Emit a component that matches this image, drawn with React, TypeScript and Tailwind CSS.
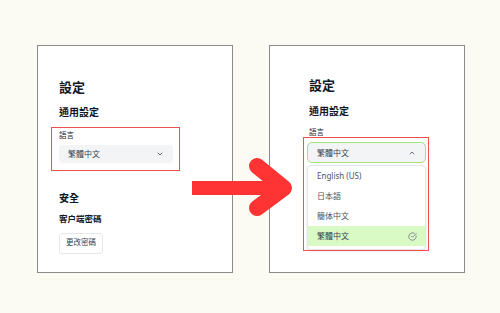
import React from "react";
import { ChevronDown, ChevronUp, CircleCheckBig } from "lucide-react";

const font = { fontFamily: "'Noto Sans', 'Noto Sans CJK TC', sans-serif" };

function Security({ mt, hidden }: { mt: string; hidden?: boolean }) {
  return (
    <div className={hidden ? "invisible flex flex-col" : "flex flex-col"}>
      <div className={`${mt} text-[10px] leading-[12px] font-bold text-gray-900`}>安全</div>
      <div className="mt-[9px] text-[8.5px] leading-[12px] font-bold text-gray-900">客户端密碼</div>
      <div className="mt-[8px] flex">
        <div className="h-[21px] px-[6px] flex items-center rounded-[3px] border border-gray-200 bg-white text-[7.5px] text-gray-700">
          更改密碼
        </div>
      </div>
    </div>
  );
}

export default function App() {
  return (
    <div
      className="relative w-[500px] h-[313px] bg-[#fbfbf4] flex items-start pl-[37px] pt-[45px] gap-[36px] overflow-hidden"
      style={font}
    >
      {/* Left panel */}
      <div className="w-[196px] h-[228px] bg-white border border-[#8c8c8c] pl-[21px] pt-[33px] flex flex-col">
        <div className="text-[13px] leading-[16px] font-bold text-gray-900">設定</div>
        <div className="mt-[11px] text-[10px] leading-[12px] font-bold text-gray-900">通用設定</div>
        <div className="relative mt-[9px] -ml-[8px] w-[129px] pl-[8px] pr-[7px] pt-[3px] pb-[7.5px]">
          <div className="text-[7.5px] leading-[10px] text-gray-800">語言</div>
          <div className="mt-[5px] h-[18px] rounded-[4px] bg-[#f3f4f6] flex items-center justify-between pl-[9px] pr-[9px]">
            <span className="text-[8px] text-gray-700">繁體中文</span>
            <ChevronDown size={8} strokeWidth={2.5} className="text-gray-600" />
          </div>
          <div className="absolute inset-0 border-[1.5px] border-[#f04f4f] pointer-events-none" />
        </div>
        <Security mt="mt-[21px]" />
      </div>

      {/* Right panel */}
      <div className="w-[196px] h-[228px] bg-white border border-[#8c8c8c] pl-[39px] pt-[31px] flex flex-col">
        <div className="text-[13px] leading-[16px] font-bold text-gray-900">設定</div>
        <div className="mt-[12px] text-[10px] leading-[12px] font-bold text-gray-900">通用設定</div>
        <div className="mt-[10px] text-[7.5px] leading-[10px] text-gray-800">語言</div>
        <div className="relative mt-[5px] w-[119px] -ml-[2px]">
          <div className="h-[21px] rounded-[5px] bg-[#f3f4f6] border border-[#a3e37a] flex items-center justify-between pl-[9px] pr-[9px]">
            <span className="text-[8px] text-gray-700">繁體中文</span>
            <ChevronUp size={8} strokeWidth={2.5} className="text-gray-600" />
          </div>
          <div className="absolute z-10 left-0 right-0 top-[23px] h-[85px] bg-white border border-gray-200 rounded-[4px] shadow-sm pb-[3px] flex flex-col">
            <div className="h-[20px] flex items-center pl-[9px] text-[8px] text-gray-600">English (US)</div>
            <div className="h-[20px] flex items-center pl-[9px] text-[8px] text-gray-600">日本語</div>
            <div className="h-[20px] flex items-center pl-[9px] text-[8px] text-gray-600">簡体中文</div>
            <div className="h-[20px] flex items-center justify-between pl-[9px] pr-[8px] bg-[#d9f9c5] text-[8px] text-gray-700">
              <span>繁體中文</span>
              <CircleCheckBig size={9} strokeWidth={2} className="text-gray-500" />
            </div>
          </div>
          <div className="absolute z-20 -left-[4px] -right-[3px] -top-[5px] h-[114px] border-[1.5px] border-[#f04f4f] pointer-events-none" />
        </div>
        <Security mt="mt-[26px]" hidden />
      </div>

      {/* Arrow */}
      <svg
        className="absolute left-0 top-0 z-30 pointer-events-none"
        width="500"
        height="313"
        viewBox="0 0 500 313"
      >
        <rect x="192" y="181" width="84" height="14" fill="#fe3434" />
        <polyline
          points="257,166 284,188 257,208"
          fill="none"
          stroke="#fe3434"
          strokeWidth="16"
          strokeLinecap="round"
          strokeLinejoin="round"
        />
      </svg>
    </div>
  );
}
